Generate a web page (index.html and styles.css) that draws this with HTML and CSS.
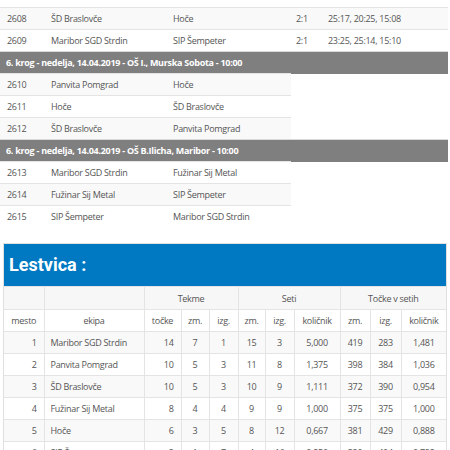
FILE: index.html
```html
<!DOCTYPE html>
<html>
<head>
<meta charset="utf-8">
<link rel="stylesheet" href="styles.css">
</head>
<body>
<table class="games">
  <colgroup><col class="c-num"><col class="c-home"><col class="c-away"><col class="c-res"><col class="c-sets"></colgroup>
  <tr class="odd"><td>2608</td><td>ŠD Braslovče</td><td>Hoče</td><td class="res">2:1</td><td class="sets">25:17, 20:25, 15:08</td></tr>
  <tr><td>2609</td><td>Maribor SGD Strdin</td><td>SIP Šempeter</td><td class="res">2:1</td><td class="sets">23:25, 25:14, 15:10</td></tr>
  <tr class="round"><td colspan="5">6. krog - nedelja, 14.04.2019 - OŠ I., Murska Sobota - 10:00</td></tr>
  <tr class="odd"><td>2610</td><td>Panvita Pomgrad</td><td>Hoče</td></tr>
  <tr><td>2611</td><td>Hoče</td><td>ŠD Braslovče</td></tr>
  <tr class="odd"><td>2612</td><td>ŠD Braslovče</td><td>Panvita Pomgrad</td></tr>
  <tr class="round"><td colspan="5">6. krog - nedelja, 14.04.2019 - OŠ B.Ilicha, Maribor - 10:00</td></tr>
  <tr><td>2613</td><td>Maribor SGD Strdin</td><td>Fužinar Sij Metal</td></tr>
  <tr class="odd"><td>2614</td><td>Fužinar Sij Metal</td><td>SIP Šempeter</td></tr>
  <tr><td>2615</td><td>SIP Šempeter</td><td>Maribor SGD Strdin</td></tr>
</table>

<div class="standings">
  <h2 class="title">Lestvica :</h2>
  <table class="table">
    <colgroup>
      <col class="w40"><col class="w100"><col class="w37"><col class="w28"><col class="w29">
      <col class="w27"><col class="w29"><col class="w46"><col class="w30"><col class="w31"><col>
    </colgroup>
    <tr class="head1"><td></td><td></td><td colspan="3">Tekme</td><td colspan="3">Seti</td><td colspan="3">Točke v setih</td></tr>
    <tr class="head2"><td>mesto</td><td>ekipa</td><td>točke</td><td>zm.</td><td>izg.</td><td>zm.</td><td>izg.</td><td>količnik</td><td>zm.</td><td>izg.</td><td>količnik</td></tr>
    <tr class="odd"><td class="r">1</td><td class="l">Maribor SGD Strdin</td><td class="r">14</td><td>7</td><td>1</td><td>15</td><td>3</td><td>5,000</td><td>419</td><td>283</td><td>1,481</td></tr>
    <tr><td class="r">2</td><td class="l">Panvita Pomgrad</td><td class="r">10</td><td>5</td><td>3</td><td>11</td><td>8</td><td>1,375</td><td>398</td><td>384</td><td>1,036</td></tr>
    <tr class="odd"><td class="r">3</td><td class="l">ŠD Braslovče</td><td class="r">10</td><td>5</td><td>3</td><td>10</td><td>9</td><td>1,111</td><td>372</td><td>390</td><td>0,954</td></tr>
    <tr><td class="r">4</td><td class="l">Fužinar Sij Metal</td><td class="r">8</td><td>4</td><td>4</td><td>9</td><td>9</td><td>1,000</td><td>375</td><td>375</td><td>1,000</td></tr>
    <tr class="odd"><td class="r">5</td><td class="l">Hoče</td><td class="r">6</td><td>3</td><td>5</td><td>8</td><td>12</td><td>0,667</td><td>381</td><td>429</td><td>0,888</td></tr>
    <tr><td class="r">6</td><td class="l">SIP Šempeter</td><td class="r">2</td><td>1</td><td>7</td><td>4</td><td>16</td><td>0,250</td><td>320</td><td>404</td><td>0,792</td></tr>
  </table>
</div>
</body>
</html>
```

FILE: styles.css
```css
html, body {
  margin: 0;
  padding: 0;
  background: #fff;
}
body {
  font-family: "Open Sans", "DejaVu Sans", sans-serif;
  font-size: 9px;
  letter-spacing: -0.28px;
  color: #555;
  padding-top: 7px;
  overflow: hidden;
}
.games {
  border-collapse: collapse;
  width: 448px;
  table-layout: fixed;
}
.c-num { width: 43px; }
.c-home { width: 122px; }
.c-away { width: 126px; }
.c-res { width: 31px; }
.c-sets { width: auto; }
.games td {
  height: 21px;
  padding: 0 0 0 8px;
  border-top: 1px solid #e4e4e4;
  white-space: nowrap;
  vertical-align: middle;
}
.games td:first-child { padding-left: 7px; }
.games td.res { padding-left: 5px; }
.games td.sets { padding-left: 6px; }
.games tr.odd td { background: #f9f9f9; }
.games tr.round td {
  background: #7f7f7f;
  color: #fff;
  font-weight: 700;
  padding-left: 6px;
  border-top: 1px solid #d9d9d9;
}
.standings {
  margin: 16px 3px 0 3px;
  border: 1px solid #e0e0e0;
  border-bottom: none;
}
.title {
  margin: 0;
  background: #0079c2;
  color: #fff;
  font-family: Roboto, "Liberation Sans", sans-serif;
  font-weight: 700;
  font-size: 18px;
  letter-spacing: 0;
  height: 42px;
  line-height: 42px;
  padding-left: 5px;
}
.table {
  border-collapse: collapse;
  width: 100%;
  table-layout: fixed;
}
.w40 { width: 40px; }
.w100 { width: 100px; }
.w37 { width: 37px; }
.w28 { width: 28px; }
.w29 { width: 29px; }
.w27 { width: 27px; }
.w46 { width: 46px; }
.w30 { width: 30px; }
.w31 { width: 31px; }
.table td {
  height: 21px;
  border: 1px solid #e4e4e4;
  text-align: center;
  padding: 0;
  white-space: nowrap;
  vertical-align: middle;
}
.table tr td:first-child { border-left: none; }
.table tr td:last-child { border-right: none; }
.table tr.head1 td { background: #f7f7f7; height: 22px; }
.table tr.odd td { background: #f9f9f9; }
.table td.r { text-align: right; padding-right: 7px; }
.table td.l { text-align: left; padding-left: 6px; }
```
